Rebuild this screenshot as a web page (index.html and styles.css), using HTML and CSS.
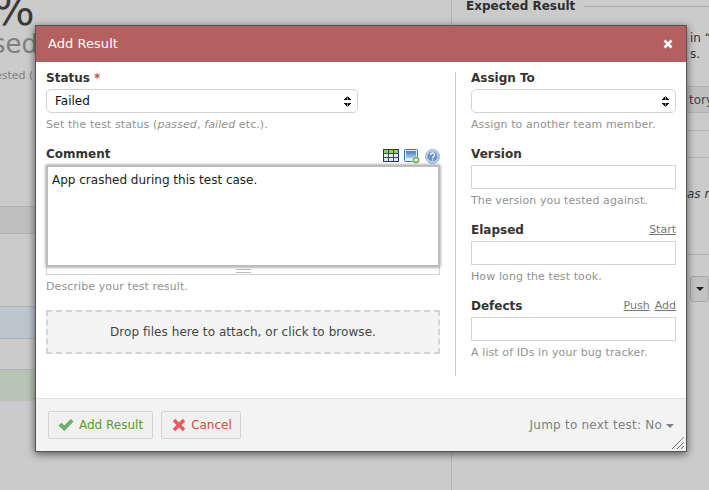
FILE: index.html
```html
<!DOCTYPE html>
<html lang="en">
<head>
  <meta charset="UTF-8" />
  <title>Add Result</title>
  <link rel="stylesheet" href="styles.css">
</head>
<body>
  <div class="page">
    <div class="page-left">
      <div class="stat-num">%</div>
      <div class="stat-label">sed</div>
      <div class="stat-note">ested (</div>
      <div class="row row-head"></div>
      <div class="row row-plain"></div>
      <div class="row row-blue"></div>
      <div class="row row-thin"></div>
      <div class="row row-green"></div>
    </div>
    <div class="page-right">
      <div class="side-title"><span>Expected Result</span><i></i></div>
      <p class="side-text">in &ldquo;<br>s.</p>
      <div class="side-bar">tory</div>
      <div class="side-row side-row-a"></div>
      <div class="side-row side-row-b"></div>
      <div class="side-note">as r</div>
      <div class="side-row side-row-c"></div>
      <div class="side-drop"><b></b></div>
    </div>
  </div>

  <div class="dialog">
    <div class="dialog-head">
      <span>Add Result</span>
      <svg class="close" width="10" height="10" viewBox="0 0 10 10"><path d="M1.5 1.5l7 7M8.5 1.5l-7 7" stroke="#fff" stroke-width="2.6"/></svg>
    </div>

    <div class="dialog-body">
      <div class="col-main">
        <div class="field">
          <label>Status <em>*</em></label>
          <div class="select">Failed<span class="arrows"></span></div>
          <p class="hint">Set the test status (<i>passed</i>, <i>failed</i> etc.).</p>
        </div>

        <div class="field field-comment">
          <div class="label-row">
            <label>Comment</label>
            <div class="tools">
              <svg width="16" height="13" viewBox="0 0 16 13">
                <rect x=".5" y=".5" width="15" height="12" fill="#dce8f6" stroke="#28336b"/>
                <path d="M1 1h14v3H1z" fill="#8fd06a"/>
                <path d="M1 4.500h14M1 8.500h14M5.500 1v11M10.500 1v11" stroke="#28336b" stroke-width=".9"/>
              </svg>
              <svg width="16" height="15" viewBox="0 0 16 15">
                <defs>
                  <linearGradient id="pic" x1="0" y1="0" x2="0" y2="1">
                    <stop offset="0" stop-color="#3f82c8"/>
                    <stop offset="1" stop-color="#a8cbe8"/>
                  </linearGradient>
                </defs>
                <rect x=".5" y=".5" width="13" height="12" rx="1" fill="#e6eef7" stroke="#3f6fa8"/>
                <rect x="2" y="2" width="10" height="7" fill="url(#pic)"/>
                <circle cx="12" cy="11" r="3.500" fill="#5c9e31" stroke="#fff" stroke-width=".6"/>
                <path d="M10 11h4M12 9v4" stroke="#fff" stroke-width="1.300"/>
              </svg>
              <svg width="15" height="15" viewBox="0 0 15 15">
                <circle cx="7.500" cy="7.500" r="7" fill="#c3d5ec" stroke="#94b0d6"/>
                <circle cx="7.500" cy="7.500" r="5" fill="#6a92cd"/>
                <path d="M5.600 6a2 2 0 1 1 3 1.700c-.8.500-1.100.8-1.100 1.600" fill="none" stroke="#fff" stroke-width="1.300"/>
                <path d="M7.500 10.300v1.300" stroke="#fff" stroke-width="1.300"/>
              </svg>
            </div>
          </div>
          <div class="editor">
            <div class="editor-text">App crashed during this test case.</div>
            <div class="editor-grip"><span></span></div>
          </div>
          <p class="hint">Describe your test result.</p>
        </div>

        <div class="dropzone">Drop files here to attach, or click to browse.</div>
      </div>

      <div class="col-side">
        <div class="field">
          <label>Assign To</label>
          <div class="select"><span class="arrows"></span></div>
          <p class="hint">Assign to another team member.</p>
        </div>
        <div class="field">
          <label>Version</label>
          <div class="input"></div>
          <p class="hint">The version you tested against.</p>
        </div>
        <div class="field">
          <div class="label-row">
            <label>Elapsed</label>
            <div class="links"><a>Start</a></div>
          </div>
          <div class="input"></div>
          <p class="hint">How long the test took.</p>
        </div>
        <div class="field">
          <div class="label-row">
            <label>Defects</label>
            <div class="links"><a>Push</a><a>Add</a></div>
          </div>
          <div class="input"></div>
          <p class="hint">A list of IDs in your bug tracker.</p>
        </div>
      </div>
    </div>

    <div class="dialog-foot">
      <div class="btn btn-ok">
        <svg width="16" height="14" viewBox="0 0 16 14"><path d="M1 7.500l2.500-2.200 2.800 2.800L12.800 1.500l2.200 2-8.700 9z" fill="#6cb56c" stroke="#4f9a50" stroke-width=".8"/></svg>
        Add Result
      </div>
      <div class="btn btn-cancel">
        <svg width="14" height="14" viewBox="0 0 14 14"><path d="M2 2l10 10M12 2L2 12" stroke="#f2585c" stroke-width="3.600"/></svg>
        Cancel
      </div>
      <div class="jump">Jump to next test: No <span class="caret"></span></div>
      <svg class="resize" width="12" height="12" viewBox="0 0 12 12"><path d="M0 12L12 0M5 12l7-7M9 12l3-3" stroke="#333" stroke-width="1" stroke-dasharray="1 .5"/></svg>
    </div>
  </div>
</body>
</html>
```

FILE: styles.css
```css
/* === Base === */
* {
  margin: 0;
  padding: 0;
  box-sizing: border-box;
}

body {
  width: 709px;
  height: 490px;
  overflow: hidden;
  background: #cbcbcb;
  font-family: "DejaVu Sans", sans-serif;
  font-size: 11px;
  color: #333;
}

/* === Page behind the dialog === */
.page {
  display: flex;
  height: 490px;
  overflow: hidden;
}

.page-left {
  width: 452px;
  border-right: 1px solid #b4b4b4;
  flex: none;
  overflow: hidden;
}

.stat-num {
  height: 36px;
  margin-top: -8px;
  margin-left: -7px;
  font-size: 44px;
  line-height: 36px;
  color: #3a3a3a;
}

.stat-label {
  height: 30px;
  margin-left: -8px;
  font-size: 26px;
  line-height: 32px;
  color: #808080;
}

.stat-note {
  height: 22px;
  margin-top: 6px;
  margin-left: -5px;
  line-height: 24px;
  color: #808080;
}

.row {
  border-bottom: 1px solid #b2b2b2;
}

.row-head {
  height: 28px;
  margin-top: 120px;
  border-top: 1px solid #b2b2b2;
  background: #c0c0c0;
}

.row-plain {
  height: 73px;
}

.row-blue {
  height: 32px;
  background: #bfc7ce;
}

.row-thin {
  height: 31px;
}

.row-green {
  height: 31px;
  background: #b9c5b5;
  border-bottom: 0;
}

.page-right {
  flex: 1;
  padding-left: 14px;
}

.side-title {
  display: flex;
  align-items: center;
  gap: 9px;
  height: 13px;
  font-size: 12px;
  font-weight: bold;
  color: #2e2e2e;
}

.side-title span {
  margin-top: -2px;
}

.side-title i {
  flex: 1;
  border-top: 1px solid #aaa;
}

.side-text {
  margin: 17px 0 0 224px;
  font-size: 12px;
  line-height: 16px;
  white-space: nowrap;
  color: #333;
}

.side-bar {
  height: 27px;
  margin: 24px 0 0 -14px;
  padding-left: 237px;
  font-size: 12px;
  line-height: 26px;
  color: #444;
  background: #c0c0c0;
  border-top: 1px solid #b2b2b2;
  border-bottom: 1px solid #b2b2b2;
}

.side-row {
  margin-left: -14px;
  border-bottom: 1px solid #b2b2b2;
}

.side-row-a {
  height: 18px;
}

.side-row-b {
  height: 27px;
}

.side-row-c {
  height: 54px;
}

.side-note {
  margin: 29px 0 0 221px;
  height: 14px;
  font-size: 12px;
  line-height: 14px;
  font-style: italic;
  white-space: nowrap;
  color: #333;
}

.side-drop {
  width: 19px;
  height: 26px;
  margin: 21px 0 0 224px;
  display: flex;
  align-items: center;
  justify-content: center;
  background: #c2c2c2;
  border: 1px solid #aaa;
  border-radius: 3px;
}

.side-drop b {
  border: 4px solid transparent;
  border-top-color: #222;
  border-bottom: 0;
}

/* === Dialog === */
.dialog {
  position: absolute;
  left: 35px;
  top: 25px;
  width: 652px;
  height: 427px;
  display: flex;
  flex-direction: column;
  background: #fff;
  border: 1px solid #555;
  box-shadow: 0 2px 8px rgba(0, 0, 0, 0.6);
}

.dialog-head {
  display: flex;
  align-items: center;
  justify-content: space-between;
  height: 36px;
  flex: none;
  padding: 0 13px 1px 12px;
  background: #b56060;
  color: #fff;
  font-size: 13px;
  letter-spacing: 0.05px;
}

.dialog-body {
  flex: 1;
  display: flex;
  padding: 10px 10px 0 10px;
}

.col-main {
  width: 410px;
  height: 304px;
  flex: none;
  border-right: 1px solid #c8c8c8;
  padding-right: 15px;
}

.col-side {
  flex: 1;
  padding-left: 15px;
}

.field {
  margin-bottom: 16px;
}

label {
  display: block;
  font-size: 12px;
  font-weight: bold;
  line-height: 12px;
  color: #333;
  margin-bottom: 5px;
}

label em {
  font-style: normal;
  color: #c0504d;
}

.label-row {
  display: flex;
  justify-content: space-between;
}

.links {
  display: flex;
  gap: 5px;
}

.links a {
  font-size: 11px;
  line-height: 12px;
  color: #777;
  text-decoration: underline;
}

.tools {
  display: flex;
  gap: 5px;
  height: 15px;
  margin-top: 1px;
  align-items: flex-start;
}

.select {
  display: flex;
  align-items: center;
  justify-content: space-between;
  height: 24px;
  padding: 0 6px 0 8px;
  border: 1px solid #d4d4d4;
  border-radius: 5px;
  font-size: 12px;
  color: #111;
}

.col-main .select {
  width: 312px;
}

.arrows {
  margin-left: auto;
  width: 7px;
  height: 11px;
  background:
    linear-gradient(135deg, transparent 50%, #111 50%) 0 0 / 3.5px 4px no-repeat,
    linear-gradient(225deg, transparent 50%, #111 50%) 3.5px 0 / 3.5px 4px no-repeat,
    linear-gradient(45deg, transparent 50%, #111 50%) 0 7px / 3.5px 4px no-repeat,
    linear-gradient(315deg, transparent 50%, #111 50%) 3.5px 7px / 3.5px 4px no-repeat;
}

.hint {
  margin-top: 5px;
  font-size: 11px;
  line-height: 14px;
  letter-spacing: 0.1px;
  color: #929292;
}

.input {
  height: 24px;
  border: 1px solid #d4d4d4;
}

.field-comment {
  margin-bottom: 0;
}

.editor {
  height: 110px;
  border: 1px solid #d4d4d4;
  border-top: 0;
  display: flex;
  flex-direction: column;
}

.editor-text {
  height: 102px;
  flex: none;
  margin: 0 -1px;
  padding: 5px 4px;
  background: #fff;
  border: 2px solid #bdbdbd;
  box-shadow: 0 0 3px rgba(0, 0, 0, 0.5);
  font-size: 12px;
  line-height: 16px;
  color: #222;
}

.editor-grip {
  flex: 1;
  display: flex;
  align-items: center;
  justify-content: center;
}

.editor-grip span {
  width: 15px;
  height: 4px;
  border-top: 1px solid #bbb;
  border-bottom: 1px solid #bbb;
}

.dropzone {
  height: 44px;
  margin-top: 16px;
  display: flex;
  align-items: center;
  justify-content: center;
  background: #f4f4f4;
  border: 2px dashed #d4d4d4;
  font-size: 12px;
  letter-spacing: 0.06px;
  color: #444;
}

/* === Footer === */
.dialog-foot {
  position: relative;
  display: flex;
  align-items: center;
  gap: 8px;
  height: 53px;
  flex: none;
  padding: 0 12px;
  background: #f3f3f3;
  border-top: 1px solid #e2e2e2;
}

.btn {
  display: flex;
  align-items: center;
  height: 28px;
  background: #f0f0f0;
  border: 1px solid #d4d4d4;
  border-radius: 2px;
  font-size: 12px;
}

.btn-ok {
  gap: 5px;
  padding: 0 9px 0 9px;
  color: #5a9e27;
}

.btn-cancel {
  gap: 5px;
  padding: 0 8px 0 10px;
  color: #d9483b;
}

.jump {
  margin-left: auto;
  font-size: 12px;
  letter-spacing: 0.22px;
  color: #808080;
}

.caret {
  display: inline-block;
  border: 4px solid transparent;
  border-top-color: #808080;
  border-bottom: 0;
  vertical-align: middle;
}

.resize {
  position: absolute;
  right: 2px;
  bottom: 2px;
}
```
